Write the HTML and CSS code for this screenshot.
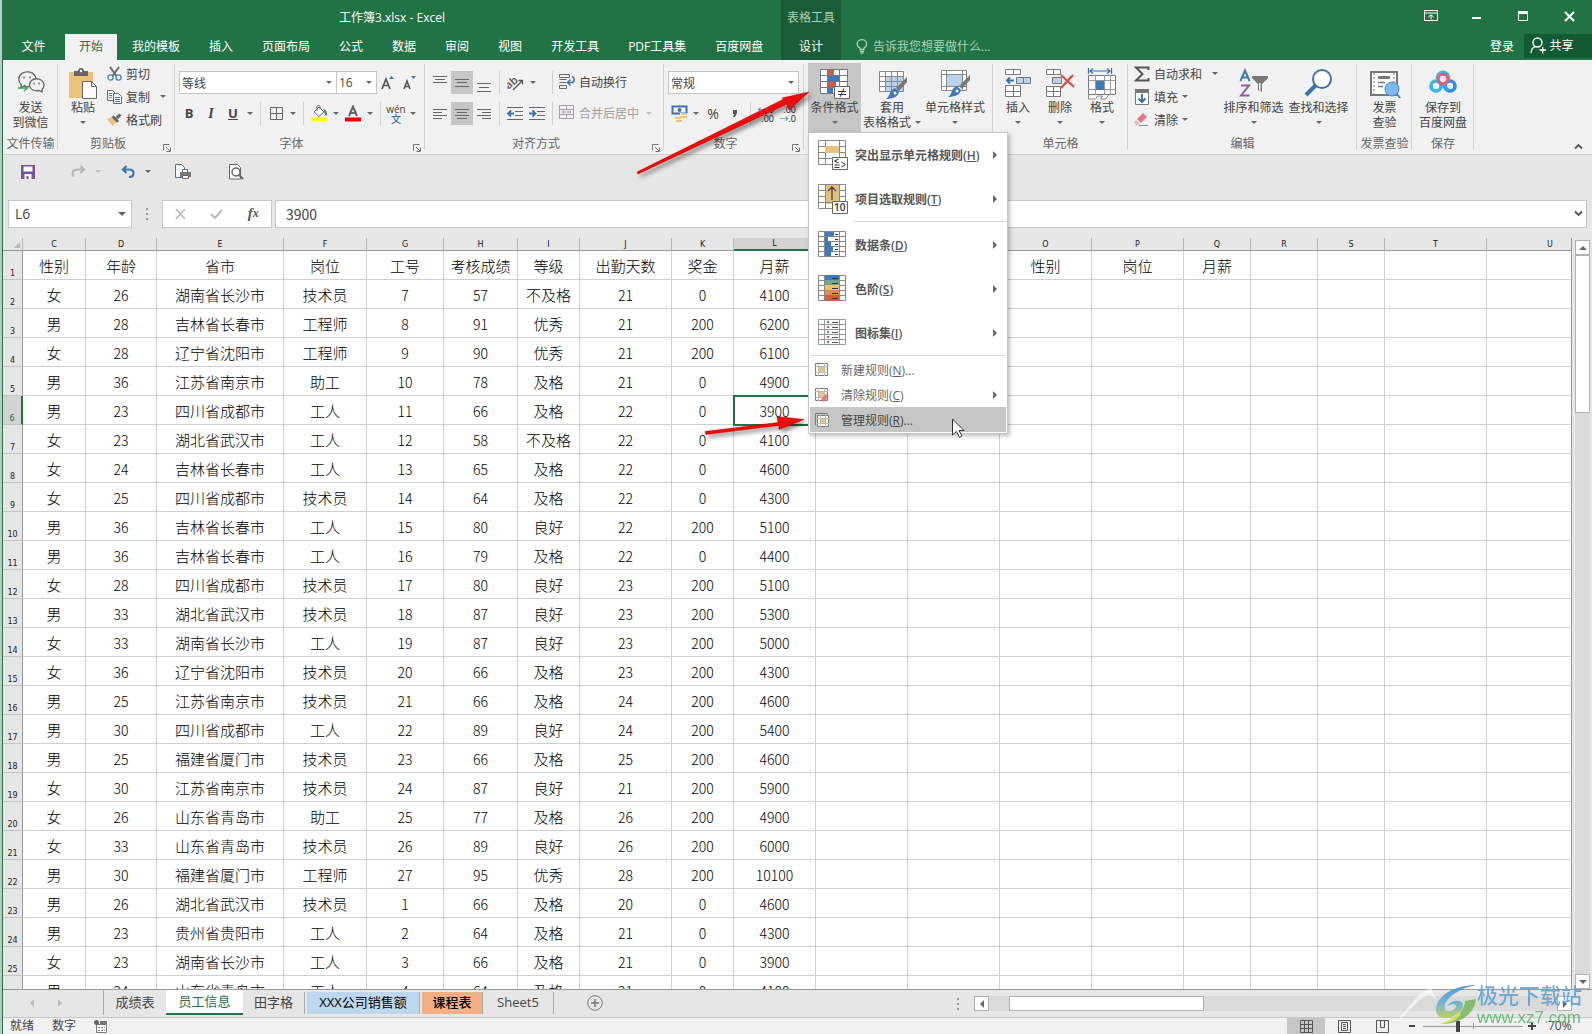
FILE: index.html
```html
<!DOCTYPE html>
<html lang="zh-CN">
<head>
<meta charset="utf-8">
<title>工作簿3.xlsx - Excel</title>
<link rel="stylesheet" href="styles.css">
</head>
<body>
<div class="app">
  <header class="titlebar">
    <div class="title-main">
      <div class="title-text">工作簿3.xlsx - Excel</div>
      <nav class="tabs">
        <button class="tab tab-file">文件</button>
        <button class="tab tab-active">开始</button>
        <button class="tab">我的模板</button>
        <button class="tab">插入</button>
        <button class="tab">页面布局</button>
        <button class="tab">公式</button>
        <button class="tab">数据</button>
        <button class="tab">审阅</button>
        <button class="tab">视图</button>
        <button class="tab">开发工具</button>
        <button class="tab">PDF工具集</button>
        <button class="tab">百度网盘</button>
      </nav>
    </div>
    <div class="title-context">
      <div class="context-name">表格工具</div>
      <button class="tab">设计</button>
    </div>
    <div class="title-side">
      <div class="window-buttons">
        <button aria-label="功能区显示选项"><svg width="14" height="12" viewBox="0 0 14 12" fill="none" stroke="#fff"><path d="M.5.5h13v10H.5zM.5 3h13M7 9.500V5M4.500 7L7 4.800 9.500 7"/></svg></button>
        <button aria-label="最小化"><svg width="10" height="12" viewBox="0 0 10 12"><path d="M0 7h9v2H0z" fill="#fff"/></svg></button>
        <button aria-label="最大化"><svg width="11" height="11" viewBox="0 0 11 11"><path d="M.5.5h9v9h-9z" fill="none" stroke="#fff"/><path d="M0 0h10v3H0z" fill="#fff"/></svg></button>
        <button aria-label="关闭"><svg width="11" height="11" viewBox="0 0 11 11"><path d="M1 1l9 9M10 1l-9 9" stroke="#fff" stroke-width="2"/></svg></button>
      </div>
      <div class="account-row">
        <label class="tell-me">
          <svg width="12" height="15" viewBox="0 0 12 15" fill="none" stroke="#a9d3b8" stroke-width="1.300"><path d="M4 10.500V9C2 8 1.200 6.500 1.200 5a4.600 4.200 0 0 1 9.400 0c0 1.500-.8 3-2.600 4v1.500zM4 12.300h4M4.500 14h3"/></svg>
          <input type="text" placeholder="告诉我您想要做什么..." aria-label="告诉我您想要做什么">
        </label>
        <button class="login">登录</button>
        <button class="share"><svg width="16" height="17" viewBox="0 0 16 17" fill="none" stroke="#fff" stroke-width="1.400"><circle cx="7.500" cy="5.500" r="4.500"/><path d="M1 16c.3-3.500 2-5.500 4-6.300M9.500 13H16M12.700 10v6.500"/></svg>共享</button>
      </div>
    </div>
  </header>

  <section class="ribbon">
    <div class="group g-send">
      <div class="group-body">
        <button class="big"><svg width="28" height="32" viewBox="0 0 28 32" fill="none" stroke="#666" stroke-width="1.300"><path d="M12 18.500c-2 .5-4 .2-5.500-.3L3.500 20l.8-3.200C.8 13 1 8 5 5.400c4-2.600 10-1.800 12.500 1.600 1 1.300 1.200 2 1.200 3"/><path d="M25 21.500c3-2.500 2.500-7-.5-9.300-3-2-7.500-2-10 .3-3.300 3-2.300 7.500 1 9.300 2.200 1.200 4.500 1.200 6.500.7l3 1.500z"/><path d="M7 8.500v2M13 8.500v2M17 14.500v2M22 14.500v2"/><path d="M1 20h9M7 17l3.500 3L7 23" stroke="#3aa56a"/></svg><span>发送</span><span>到微信</span></button>
      </div>
      <div class="group-foot"><span>文件传输</span></div>
    </div>

    <div class="group g-clip">
      <div class="group-body">
        <button class="big"><svg width="30" height="32" viewBox="0 0 30 32"><path d="M1 4h24v26H1z" fill="#edc17a"/><path d="M6 3h4c0-4 6-4 6 0h4v5H6z" fill="#666"/><circle cx="13" cy="3" r="1.200" fill="#fff"/><path d="M14.500 13.500h9l5 5v12h-14z" fill="#fff" stroke="#666"/><path d="M23.500 13.500v5h5" fill="none" stroke="#666"/></svg><span>粘贴</span><i class="caret"></i></button>
        <div class="stack">
          <button class="line"><svg width="15" height="15" viewBox="0 0 15 15" fill="none"><path d="M3 1l6.500 9M12 1L5.500 10" stroke="#666" stroke-width="2"/><circle cx="3.500" cy="11.500" r="2.600" stroke="#4a7ebb" stroke-width="1.300"/><circle cx="11.500" cy="11.500" r="2.600" stroke="#4a7ebb" stroke-width="1.300"/></svg><span>剪切</span></button>
          <button class="line"><svg width="15" height="14" viewBox="0 0 15 14"><path d="M.5.500h5l2 2v8h-7z" fill="#fff" stroke="#666"/><path d="M6.500 3.500h5l3 3v7h-8z" fill="#fff" stroke="#4a6f9f"/><path d="M2 3.500h3M2 5.500h3M2 7.500h3M8 7.500h5M8 9.500h5M8 11.500h5" stroke="#4a7ebb"/></svg><span class="copy-label">复制</span><i class="caret"></i></button>
          <button class="line"><svg width="15" height="14" viewBox="0 0 16 14"><path d="M0 6l5-2 5 5-4 4.500z" fill="#edc17a"/><path d="M5 4l2-2 6 6-2.500 2z" fill="#666"/><path d="M9 4l4-4 2.500 2L12 6z" fill="#666"/></svg><span>格式刷</span></button>
        </div>
      </div>
      <div class="group-foot"><span>剪贴板</span><button class="launcher" aria-label="剪贴板设置"><svg width="8" height="8" viewBox="0 0 8 8" fill="none" stroke="#777"><path d="M.5 6.500v-6h6M3 3l4 4M7.500 3.500v4h-4"/></svg></button></div>
    </div>

    <div class="group g-font">
      <div class="group-body rows">
        <div class="row fonts">
          <button class="combo font-name"><span>等线</span><i class="caret"></i></button><button class="combo font-size"><span>16</span><i class="caret"></i></button>
          <button class="slot" aria-label="增大字号"><svg width="14" height="16" viewBox="0 0 14 16"><path d="M1 14L5 4l4 10M2.500 10.500h5" fill="none" stroke="#555" stroke-width="1.700"/><path d="M8 4l2.500-3L13 4z" fill="#3b73af"/></svg></button>
          <button class="slot" aria-label="减小字号"><svg width="14" height="16" viewBox="0 0 14 16"><path d="M1 14l3-8 3 8M2 11.500h4" fill="none" stroke="#555" stroke-width="1.600"/><path d="M8 1l2.500 3L13 1z" fill="#3b73af"/></svg></button>
        </div>
        <div class="row">
          <button class="slot"><b>B</b></button><button class="slot"><b class="ital">I</b></button><button class="slot"><b class="under">U</b></button><button class="drop" aria-label="下划线选项"><i class="caret"></i></button><i class="vsep"></i>
          <button class="slot" aria-label="边框"><svg width="13" height="13" viewBox="0 0 13 13" fill="none" stroke="#666"><path d="M.5.500h12v12H.5zM6.500 0v13M0 6.500h13"/></svg></button><button class="drop" aria-label="边框选项"><i class="caret"></i></button><i class="vsep"></i>
          <button class="slot" aria-label="填充颜色"><svg width="17" height="17" viewBox="0 0 17 17"><path d="M3 7l5-5 5 5-5 4.500z" fill="#fff" stroke="#666"/><path d="M6 6V1.500c0-1.500 3-1.500 3 0V4" fill="none" stroke="#666"/><path d="M12 4c4 1 4.500 4 3.500 7-2-1-1.500-4-3.500-7z" fill="#3b73af"/><path d="M0 12.500h16v4H0z" fill="#ff0"/></svg></button><button class="drop" aria-label="填充选项"><i class="caret"></i></button>
          <button class="slot" aria-label="字体颜色"><svg width="16" height="17" viewBox="0 0 16 17"><path d="M4 11l4-9.500L12 11M5.500 8h5" fill="none" stroke="#666" stroke-width="2"/><path d="M0 12.500h16v4H0z" fill="#f00000"/></svg></button><button class="drop" aria-label="字体颜色选项"><i class="caret"></i></button><i class="vsep"></i>
          <button class="slot phonetic"><span>wén</span><span>文</span></button><button class="drop" aria-label="拼音选项"><i class="caret"></i></button>
        </div>
      </div>
      <div class="group-foot"><span>字体</span><button class="launcher" aria-label="字体设置"><svg width="8" height="8" viewBox="0 0 8 8" fill="none" stroke="#777"><path d="M.5 6.500v-6h6M3 3l4 4M7.500 3.500v4h-4"/></svg></button></div>
    </div>

    <div class="group g-align">
      <div class="group-body rows">
        <div class="row">
          <button class="slot" aria-label="顶端对齐"><svg width="14" height="18" viewBox="0 0 14 18" stroke="#666"><path d="M0 2.500h14M2 5.500h10M0 8.500h14"/></svg></button><button class="slot pressed" aria-label="垂直居中"><svg width="14" height="18" viewBox="0 0 14 18" stroke="#666"><path d="M0 5.500h14M2 8.500h10M0 12.500h14"/></svg></button><button class="slot" aria-label="底端对齐"><svg width="14" height="18" viewBox="0 0 14 18" stroke="#666"><path d="M0 9.500h14M2 13.500h10M0 17.500h14"/></svg></button><i class="vsep"></i>
          <button class="slot" aria-label="方向"><svg width="17" height="16" viewBox="0 0 17 16"><text x="-2" y="11" font-size="11" font-weight="600" font-family="Open Sans, sans-serif" fill="#555" transform="rotate(-40 5 8)">ab</text><path d="M6 15L15 6M11.500 5.500H15.500V9.500" fill="none" stroke="#555" stroke-width="1.300"/></svg></button><button class="drop wide" aria-label="方向选项"><i class="caret"></i></button><i class="vsep"></i>
          <button class="line wrap"><svg width="16" height="15" viewBox="0 0 16 15" fill="none"><path d="M.5.500h10v3H.5zM.5 5.500h7M.5 8.500h7M.5 11.500h7v3h-7z" stroke="#666"/><path d="M13 2.500c3 1 3 6-.5 6H9M11.500 5.500l-3 3 3 3" stroke="#3b73af" stroke-width="1.500"/></svg><span>自动换行</span></button>
        </div>
        <div class="row">
          <button class="slot" aria-label="左对齐"><svg width="14" height="12" viewBox="0 0 14 12" stroke="#666"><path d="M0 1.500h14M0 4.500h9M0 7.500h14M0 10.500h9"/></svg></button><button class="slot pressed" aria-label="居中"><svg width="14" height="12" viewBox="0 0 14 12" stroke="#666"><path d="M0 1.500h14M2 4.500h10M0 7.500h14M2 10.500h10"/></svg></button><button class="slot" aria-label="右对齐"><svg width="14" height="12" viewBox="0 0 14 12" stroke="#666"><path d="M0 1.500h14M5 4.500h9M0 7.500h14M5 10.500h9"/></svg></button><i class="vsep"></i>
          <button class="slot" aria-label="减少缩进"><svg width="16" height="13" viewBox="0 0 16 13" fill="none"><path d="M0 .5h16M8 4.500h8M8 8.500h8M0 12.500h16" stroke="#666"/><path d="M7 6.500H1.500M4 3.500l-3 3 3 3" stroke="#3b73af" stroke-width="1.800"/></svg></button><button class="slot" aria-label="增加缩进"><svg width="16" height="13" viewBox="0 0 16 13" fill="none"><path d="M0 .5h16M8 4.500h8M8 8.500h8M0 12.500h16" stroke="#666"/><path d="M0 6.500h5.500M3.500 3.500l3 3-3 3" stroke="#3b73af" stroke-width="1.800"/></svg></button><i class="vsep"></i>
          <button class="line wrap faded" disabled><svg width="16" height="15" viewBox="0 0 16 15" fill="none" stroke="#a8a0a8"><path d="M.5.500h14v13H.5zM.5 4.500h14M.5 9.500h14M7.500 0v4M7.500 10v4M3 7h9M5 5.500L3 7l2 1.500M10 5.500L12 7l-2 1.500"/></svg><span>合并后居中</span></button><button class="drop faded" aria-label="合并选项"><i class="caret"></i></button>
        </div>
      </div>
      <div class="group-foot"><span>对齐方式</span><button class="launcher" aria-label="对齐设置"><svg width="8" height="8" viewBox="0 0 8 8" fill="none" stroke="#777"><path d="M.5 6.500v-6h6M3 3l4 4M7.500 3.500v4h-4"/></svg></button></div>
    </div>

    <div class="group g-num">
      <div class="group-body rows">
        <div class="row"><button class="combo num-format"><span>常规</span><i class="caret"></i></button></div>
        <div class="row">
          <button class="slot" aria-label="会计数字格式"><svg width="17" height="17" viewBox="0 0 17 17"><path d="M1.500 1.500h14v7h-14z" fill="#fff" stroke="#3b73af" stroke-width="2"/><circle cx="8.500" cy="5" r="2" fill="#3b73af"/><path d="M9 8h8v6H9z" fill="#f1f1f1"/><path d="M10 8h6v2h-6zM9 11h7v2H9zM4 12h6v2H4zM5 15h6v2H5z" fill="#edc17a"/></svg></button><button class="drop" aria-label="货币选项"><i class="caret"></i></button><button class="slot percent">%</button><button class="slot" aria-label="千位分隔样式"><svg width="6" height="9" viewBox="0 0 6 9"><path d="M1 1h4v3L3 8H1l1-3H1z" fill="#555"/></svg></button><i class="vsep"></i>
          <button class="slot decimals"><span><em>←</em>.0</span><span>.00</span></button><button class="slot decimals"><span>.00</span><span><em>→</em>.0</span></button>
        </div>
      </div>
      <div class="group-foot"><span>数字</span><button class="launcher" aria-label="数字设置"><svg width="8" height="8" viewBox="0 0 8 8" fill="none" stroke="#777"><path d="M.5 6.500v-6h6M3 3l4 4M7.500 3.500v4h-4"/></svg></button></div>
    </div>

    <div class="group g-style">
      <div class="group-body">
        <div class="menu-anchor">
          <button class="big pressed" aria-expanded="true"><svg width="32" height="32" viewBox="0 0 32 32"><path d="M1.500 1.500h27v24h-27z" fill="#fff"/><path d="M9 1h6v6H9zM9 13h8v6H9z" fill="#d05a4a"/><path d="M9 7h11v6H9zM9 19h5v6H9z" fill="#3f7ab8"/><path d="M1.500 1.500h27v24h-27zM1 7.500h28M1 13.500h28M1 19.500h28M8.500 1v24M20.500 1v24" fill="none" stroke="#777"/><path d="M15.500 18.500h15v12h-15z" fill="#fff" stroke="#666"/><path d="M19 23.500h8M19 26.500h8M25 20.500l-4 8.500" stroke="#333" fill="none"/></svg><span>条件格式</span><i class="caret"></i></button>
          <div class="menu" role="menu">
            <button class="item item-large"><svg width="30" height="30" viewBox="0 0 30 30"><path d="M.5.500h27v24H.5z" fill="#fff"/><path d="M.5.500h27v24H.5zM0 6.500h28M0 12.500h28M0 18.500h28M7.500 0v24M21.500 0v24" fill="none" stroke="#888"/><path d="M7 6h14v7H7z" fill="#e9c47c"/><path d="M14.500 17.500h15v12h-15z" fill="#fff" stroke="#666"/><path d="M20.500 19l-4 2 4 2M16.500 25h5M16.500 27.500h5M23.500 22l4 2.500-4 2.500" fill="none" stroke="#333"/></svg><span>突出显示单元格规则(<u>H</u>)</span><i class="arrow"></i></button>
            <button class="item item-large"><svg width="30" height="30" viewBox="0 0 30 30"><path d="M7 0h14v20H7z" fill="#e2c27d"/><path d="M.5.500h27v24H.5zM0 6.500h7M21 6.500h7M0 12.500h7M21 12.500h7M0 18.500h28M7.500 0v24M21.500 0v24" fill="none" stroke="#888"/><path d="M14 16V3M10 7l4-4 4 4" fill="none" stroke="#444" stroke-width="1.300"/><path d="M14.500 17.500h15v12h-15z" fill="#fff" stroke="#666"/><text x="16" y="27" font-size="10" font-family="Open Sans, sans-serif" fill="#333">10</text></svg><span>项目选取规则(<u>T</u>)</span><i class="arrow"></i></button>
            <hr class="indent">
            <button class="item item-large"><svg width="30" height="28" viewBox="0 0 30 28"><path d="M.5.500h27v25H.5zM0 5.500h28M0 10.500h28M0 15.500h28M0 20.500h28M6.500 0v26M21.500 0v26" fill="none" stroke="#888"/><path d="M7 1h9v4H7zM7 6h3v4H7zM7 10h6v6H7zM7 16h8v5H7zM7 21h6v4H7z" fill="#3f7ab8"/><path d="M17 3.500h3M17 8.500h3M17 13.500h3M17 18.500h3M17 23.500h3" stroke="#333"/></svg><span>数据条(<u>D</u>)</span><i class="arrow"></i></button>
            <button class="item item-large"><svg width="30" height="28" viewBox="0 0 30 28"><path d="M.5.500h27v25H.5zM0 5.500h28M0 10.500h28M0 15.500h28M0 20.500h28M6.500 0v26M21.500 0v26" fill="none" stroke="#888"/><path d="M7 0h14v5H7z" fill="#3f7ab8"/><path d="M7 5h14v5H7z" fill="#6fa88f"/><path d="M7 10h14v5H7z" fill="#e9c46c"/><path d="M7 15h14v5H7z" fill="#e08a50"/><path d="M7 20h14v6H7z" fill="#d65a40"/><path d="M14 3.500h6M14 8.500h6M14 13.500h6M14 18.500h6M14 23.500h6" stroke="#333"/></svg><span>色阶(<u>S</u>)</span><i class="arrow"></i></button>
            <button class="item item-large"><svg width="30" height="28" viewBox="0 0 30 28"><path d="M.5.500h27v25H.5zM0 5.500h28M0 10.500h28M0 15.500h28M0 20.500h28M6.500 0v26M21.500 0v26" fill="none" stroke="#999"/><path d="M9 2h2v2H9zM9 12h2v2H9zM9 22h2v2H9z" fill="#4f9a7f"/><path d="M9 7h2v2H9zM9 17h2v2H9z" fill="#d65a40"/><path d="M14 3.500h6M14 8.500h6M14 13.500h6M14 18.500h6M14 23.500h6" stroke="#555"/></svg><span>图标集(<u>I</u>)</span><i class="arrow"></i></button>
            <hr>
            <button class="item"><svg width="14" height="14" viewBox="0 0 14 14"><path d="M.5.500h12v12H.5z" fill="#fff" stroke="#777"/><path d="M0 3.500h13M0 9.500h13M3.500 0v13M9.500 0v13" stroke="#bbb"/><path d="M4 4h5v5H4z" fill="#e9c47c"/></svg><span>新建规则(<u>N</u>)...</span></button>
            <button class="item"><svg width="14" height="14" viewBox="0 0 14 14"><path d="M.5.500h12v12H.5z" fill="#fff" stroke="#777"/><path d="M0 3.500h13M0 9.500h13M3.500 0v13M9.500 0v13" stroke="#bbb"/><path d="M4 4h5v5H4z" fill="#e9c47c"/><path d="M6 11l5-5 3 2.500L9 14z" fill="#e8748a"/></svg><span>清除规则(<u>C</u>)</span><i class="arrow"></i></button>
            <button class="item item-hover"><svg width="14" height="14" viewBox="0 0 14 14"><path d="M.5 12V.5H13" fill="none" stroke="#777"/><path d="M2.500 2.500h11v11h-11z" fill="#fff" stroke="#777"/><path d="M2 5.500h12M2 10.500h12M5.500 2v12M10.500 2v12" stroke="#bbb"/><path d="M6 6h4v4H6z" fill="#e9c47c"/></svg><span>管理规则(<u>R</u>)...</span></button>
          </div>
        </div>
        <button class="big w-table"><svg width="32" height="32" viewBox="0 0 32 32"><path d="M3.500 3.500h24v20h-24z" fill="#fff"/><path d="M9 9h18v14H9z" fill="#b9d3ea"/><path d="M3.500 3.500h24v20h-24zM3 8.500h25M3 13.500h25M3 18.500h25M9.500 3v21M15.500 3v21M21.500 3v21" fill="none" stroke="#888"/><path d="M31 9v5l-8 9-3-3z" fill="#777"/><path d="M19 20l4 4c-1 5-7 7-13 7 4-2 3-9 9-11z" fill="#3f7ab8"/><circle cx="19" cy="25" r="1.500" fill="#fff"/></svg><span>套用</span><span>表格格式<i class="caret"></i></span></button>
        <button class="big w-cell"><svg width="32" height="32" viewBox="0 0 32 32"><path d="M2.500 2.500h25v20h-25z" fill="#fff"/><path d="M7 7h16v11H7z" fill="#b9d3ea"/><path d="M2.500 2.500h25v20h-25zM2 6.500h26M2 18.500h26M7.500 2v21M23.500 2v21" fill="none" stroke="#888"/><path d="M31 7v5l-8 9-3-3z" fill="#777"/><path d="M18 18l4 4c-1 5-7 7-13 7 4-2 3-9 9-11z" fill="#3f7ab8"/><circle cx="18" cy="23" r="1.500" fill="#fff"/></svg><span>单元格样式</span><i class="caret"></i></button>
      </div>
      <div class="group-foot"></div>
    </div>

    <div class="group g-cells">
      <div class="group-body">
        <button class="big w-small"><svg width="28" height="32" viewBox="0 0 28 32"><path d="M1.500 1.500h15v5h-15zM9.500 1v6M1.500 17.500h15v11h-15zM1 23.500h16M9.500 17v12" fill="#fff" stroke="#777"/><path d="M12.500 9.500h14v6h-14z" fill="#b9d3ea" stroke="#777"/><path d="M19.500 9v7" stroke="#777"/><path d="M10 12.500H3M6 9.500l-3 3 3 3" fill="none" stroke="#3b73af" stroke-width="2"/></svg><span>插入</span><i class="caret"></i></button>
        <button class="big w-small"><svg width="30" height="32" viewBox="0 0 30 32"><path d="M1.500 1.500h14v5h-14zM8.500 1v6M1.500 18.500h14v10h-14zM1 23.500h15M8.500 18v11" fill="#fff" stroke="#777"/><path d="M7.500 9.500h9v6h-9z" fill="#b9d3ea" stroke="#777"/><path d="M16 7l13 12M28 7L16 20" stroke="#dc4b38" stroke-width="2.200"/></svg><span>删除</span><i class="caret"></i></button>
        <button class="big w-small"><svg width="30" height="32" viewBox="0 0 30 32"><path d="M1.500 0v6M24.500 0v6M3 3h20M6 .5L3 3l3 2.500M20 .5L23 3l-3 2.500" fill="none" stroke="#3b73af" stroke-width="1.200"/><path d="M1.500 7.500h27v19h-27z" fill="#fff" stroke="#777"/><path d="M1 12.500h28M1 21.500h28M8.500 7v20M17.500 7v20M23.500 7v20" stroke="#999"/><path d="M9 13h8v9H9z" fill="#3f7ab8"/><path d="M1.500 27v4h7l2-3h5l-2 3h5l3-4" fill="#fff" stroke="#888"/></svg><span>格式</span><i class="caret"></i></button>
      </div>
      <div class="group-foot"><span>单元格</span></div>
    </div>

    <div class="group g-edit">
      <div class="group-body">
        <div class="stack">
          <button class="line"><svg width="16" height="16" viewBox="0 0 16 16"><path d="M14.500 4V1.500H2L8.500 8 2 14.500h12.500V12" fill="none" stroke="#555" stroke-width="2"/></svg><span class="sum-label">自动求和</span><i class="caret"></i></button>
          <button class="line"><svg width="16" height="16" viewBox="0 0 16 16"><path d="M1.500 1.500h13v14h-13z" fill="#fff" stroke="#777"/><path d="M1 0h14v4H1z" fill="#777"/><path d="M8 5v8M4.500 9.500L8 13l3.500-3.500" fill="none" stroke="#3b73af" stroke-width="2"/></svg><span>填充</span><i class="caret"></i></button>
          <button class="line"><svg width="16" height="14" viewBox="0 0 16 14"><path d="M3 6l6-6 4 4-6 6z" fill="#e8748a"/><path d="M2 7l4 4-2 1H2L0 9z" fill="#f2b0bc"/><path d="M5 12.500h9" stroke="#888"/></svg><span>清除</span><i class="caret"></i></button>
        </div>
        <button class="big w-find"><svg width="30" height="32" viewBox="0 0 30 32"><path d="M1.500 13L6 2.500 10.500 13M3 9.500h6" fill="none" stroke="#3f7ab8" stroke-width="2"/><path d="M2 17.500h8L2 27.500h8.500" fill="none" stroke="#8e5aa8" stroke-width="2"/><path d="M13 8h16v2l-6 6v8l-4-2v-6l-6-6z" fill="#777"/><path d="M20 15v7l1.500 1v-8z" fill="#fff"/></svg><span>排序和筛选</span><i class="caret"></i></button>
        <button class="big w-find"><svg width="30" height="32" viewBox="0 0 30 32"><path d="M2 27L12 17" stroke="#3b73af" stroke-width="4"/><circle cx="18" cy="11" r="9" fill="#fff" stroke="#3b73af" stroke-width="2"/></svg><span>查找和选择</span><i class="caret"></i></button>
      </div>
      <div class="group-foot"><span>编辑</span></div>
    </div>

    <div class="group g-send">
      <div class="group-body">
        <button class="big"><svg width="32" height="32" viewBox="0 0 32 32"><path d="M2 4h26v23H2z" fill="#fff" stroke="#777" stroke-width="2"/><path d="M5 5v21M25 5v12" stroke="#777" stroke-dasharray="2 2"/><path d="M9 8h12v3H9z" fill="#777"/><path d="M9 14.500h7M9 18.500h5" stroke="#777" stroke-width="1.500"/><circle cx="23" cy="21" r="7" fill="#7db8ec" stroke="#4a86c0"/><path d="M28 26l3 4" stroke="#4a86c0" stroke-width="2"/></svg><span>发票</span><span>查验</span></button>
      </div>
      <div class="group-foot"><span>发票查验</span></div>
    </div>

    <div class="group g-save">
      <div class="group-body">
        <button class="big w-save"><svg width="28" height="32" viewBox="0 0 28 32" fill="none" stroke-width="3.600"><circle cx="7" cy="18" r="5" stroke="#35b8ea"/><circle cx="21" cy="18" r="5" stroke="#2d8cf0"/><path d="M8.500 11a5.600 5.600 0 1 1 11 0" stroke="#35b8ea"/><path d="M10 14l9 8" stroke="#35a4ee"/><circle cx="14" cy="11" r="4.800" stroke="#ee5b78" stroke-width="3"/></svg><span>保存到</span><span>百度网盘</span></button>
      </div>
      <div class="group-foot"><span>保存</span></div>
    </div>
    <button class="collapse" aria-label="折叠功能区"><svg width="9" height="7" viewBox="0 0 9 7"><path d="M1 5.500L4.500 2 8 5.500" fill="none" stroke="#555" stroke-width="1.800"/></svg></button>
  </section>

  <section class="quick">
    <button class="q-save" aria-label="保存"><svg width="14" height="14" viewBox="0 0 14 14"><path d="M0 0h14v14H0z" fill="#7a4f9e"/><path d="M2.500 1.500h9v5h-9zM3.500 9h7v5h-7z" fill="#fff"/><path d="M5.500 11h2v3h-2z" fill="#7a4f9e"/></svg></button>
    <button class="q-redo" aria-label="恢复" disabled><svg width="15" height="13" viewBox="0 0 15 13" fill="none" stroke="#b5b5b5" stroke-width="2"><path d="M13 4.500H6C2 4.500.5 8 2.500 11.500M9.500 1L13 4.500 9.500 8"/></svg><i class="caret"></i></button>
    <button class="q-undo" aria-label="撤消"><svg width="15" height="13" viewBox="0 0 15 13" fill="none" stroke="#3b73af" stroke-width="2.200"><path d="M2 4.500h6c6 0 6 7.500 0 7.500M5.500 1L2 4.500 5.500 8"/></svg><i class="caret"></i></button>
    <button class="q-print" aria-label="快速打印"><svg width="17" height="16" viewBox="0 0 17 16"><path d="M.5.500h6l3 3v10H.5z" fill="#fff" stroke="#4a6f9f"/><path d="M7.500 5.500h5v3h-5z" fill="#fff" stroke="#666"/><path d="M5 8h11v5H5z" fill="#777"/><path d="M7.500 11.500h6v3h-6z" fill="#fff" stroke="#666"/></svg></button>
    <button class="q-view" aria-label="打印预览"><svg width="15" height="16" viewBox="0 0 15 16"><path d="M.5.500h8l3 3v11.500H.5z" fill="#fff" stroke="#666"/><circle cx="7" cy="8" r="4" fill="#fff" stroke="#666" stroke-width="1.500"/><path d="M10 11l4 4" stroke="#666" stroke-width="2"/></svg></button>
  </section>

  <section class="formula">
    <div class="name-box"><input type="text" value="L6" aria-label="名称框"><i class="caret caret-big"></i></div>
    <i class="grip"></i>
    <div class="fx">
      <button aria-label="取消"><svg width="11" height="10" viewBox="0 0 11 10"><path d="M1 0l9 10M10 0L1 10" stroke="#bbb" stroke-width="1.600"/></svg></button>
      <button aria-label="输入"><svg width="13" height="10" viewBox="0 0 13 10"><path d="M1 5l4 4 7-8" fill="none" stroke="#bbb" stroke-width="2"/></svg></button>
      <button class="fx-name">f<small>x</small></button>
    </div>
    <div class="formula-box"><input type="text" value="3900" aria-label="编辑栏"><svg width="9" height="7" viewBox="0 0 9 7"><path d="M1 1.500L4.500 5 8 1.500" fill="none" stroke="#555" stroke-width="1.800"/></svg></div>
  </section>

  <main class="work">
    <div class="sheet">
      <table class="grid" id="grid">
        <colgroup><col class="c20"><col class="c63"><col class="c71"><col class="c127"><col class="c83"><col class="c77"><col class="c74"><col class="c62"><col class="c92"><col class="c62"><col class="c82"><col class="c92"><col class="c92"><col class="c92"><col class="c92"><col class="c67"><col class="c67"><col class="c67"><col class="c102"><col class="c127"></colgroup>
        <thead><tr id="letters"></tr></thead>
        <tbody id="rows"></tbody>
      </table>
    </div>
    <div class="vscroll">
      <button class="sb" aria-label="向上滚动"><i class="tri-up"></i></button>
      <div class="vtrack"><div class="vthumb"></div></div>
      <button class="sb" aria-label="向下滚动"><i class="tri-down"></i></button>
    </div>
  </main>

  <footer class="sheetbar">
    <div class="sheet-nav"><button aria-label="上一张"><i class="tri-left pale"></i></button><button aria-label="下一张"><i class="tri-right pale"></i></button></div>
    <div class="sheet-tabs">
      <button class="stab s1">成绩表</button>
      <button class="stab s2">员工信息</button>
      <button class="stab s3">田字格</button>
      <button class="stab s4">XXX公司销售额</button>
      <button class="stab s5">课程表</button>
      <button class="stab s6">Sheet5</button>
    </div>
    <button class="add-sheet" aria-label="新工作表"><svg width="16" height="16" viewBox="0 0 16 16" fill="none" stroke="#777"><circle cx="8" cy="8" r="7.300"/><path d="M8 4v8M4 8h8" stroke-width="1.500"/></svg></button>
    <div class="hscroll">
      <i class="grip"></i>
      <button class="sb" aria-label="向左滚动"><i class="tri-left"></i></button>
      <div class="htrack"><div class="hthumb"></div></div>
      <button class="sb" aria-label="向右滚动"><i class="tri-right"></i></button>
    </div>
  </footer>

  <footer class="status">
    <span>就绪</span><span>数字</span>
    <svg width="13" height="13" viewBox="0 0 13 13"><path d="M2.500 4.500h10v8h-10z" fill="#fff" stroke="#777"/><path d="M6 1h7v3H6z" fill="#777"/><circle cx="2.500" cy="2.500" r="2.500" fill="#666"/><path d="M4 7.500h7M4 10.500h7" stroke="#777" stroke-dasharray="2 1"/></svg>
    <div class="views">
      <button class="view-on" aria-label="普通"><svg width="13" height="13" viewBox="0 0 13 13" fill="none" stroke="#555"><path d="M.5.500h12v12H.5zM4.500 0v13M8.500 0v13M0 4.500h13M0 8.500h13"/></svg></button>
      <button aria-label="页面布局"><svg width="13" height="13" viewBox="0 0 13 13" fill="none" stroke="#555"><path d="M.5.500h12v12H.5zM3.500 2.500h6v8h-6zM5 4.500h3M5 6.500h3M5 8.500h3"/></svg></button>
      <button aria-label="分页预览"><svg width="13" height="13" viewBox="0 0 13 13" fill="none" stroke="#555"><path d="M.5.500h12v12H.5zM4.500 0v7.500M8.500 0v7.500M4.500 7.500h4"/></svg></button>
    </div>
    <button class="zoom-btn" aria-label="缩小"><svg width="7" height="8" viewBox="0 0 7 8"><path d="M0 4h6" stroke="#444" stroke-width="2"/></svg></button>
    <input class="zoom" type="range" min="0" max="100" value="34" aria-label="显示比例">
    <button class="zoom-btn" aria-label="放大"><svg width="8" height="8" viewBox="0 0 8 8"><path d="M0 4h8M4 0v8" stroke="#444" stroke-width="2"/></svg></button>
    <span class="zoom-value">70%</span>
  </footer>
</div>

<svg class="note-arrows" width="400" height="400" viewBox="630 80 400 400">
  <defs><filter id="shade" x="-20%" y="-20%" width="150%" height="160%"><feDropShadow dx="3" dy="3" stdDeviation="2" flood-opacity=".45"/></filter></defs>
  <g fill="#ee0808" stroke="#b00" stroke-width=".5" filter="url(#shade)">
    <path d="M637 172l147-73-2-1 27-6-20 18-2-6-149 70z"/>
    <path d="M705 431.500l73-9-1-6 27 3-25 10v-4l-73 9z"/>
  </g>
  <path d="M952.500 419v16l4-3.500 3 6 2.500-1.500-3-5.500h5z" fill="#fff" stroke="#333"/>
</svg>
<div class="site-mark">
  <svg width="80" height="42" viewBox="0 0 80 42">
    <defs><linearGradient id="swirl" x1="0" y1="0" x2="0" y2="1"><stop offset="0" stop-color="#3f93cf"/><stop offset=".5" stop-color="#5aa9d8"/><stop offset="1" stop-color="#b9cf4e"/></linearGradient></defs>
    <path d="M0 38C12 22 22 8 34 4l6 12-8-6C22 14 10 30 0 38z" fill="#fff" opacity=".7"/>
    <path d="M80 1C62 1 42 8 39 24c-1 9 7 12 15 9 8-2 13-8 12-13-2-5-12-4-16 2 6-3 10-2 9 1-2 4-9 6-11 2-3-9 14-21 32-24z" fill="url(#swirl)"/>
    <path d="M79 15c-1 12-12 25-35 25 10-2 23-10 24-23z" fill="#79b957"/>
    <path d="M64 30c-5 7-13 10-22 10 5-1 14-5 18-11z" fill="#d5dc4e"/>
  </svg>
  <div class="mark-text"><span class="mark-name">极光下载站</span><span class="mark-url">www.xz7.com</span></div>
</div>
<script src="script.js"></script>
</body>
</html>
```

FILE: styles.css
```css
* { box-sizing: border-box; }
html, body { height: 100%; }
body {
  margin: 0;
  background: #bcc8c2;
  font-family: "Open Sans", "Noto Sans CJK SC", sans-serif;
  font-size: 12px;
  color: #444;
  overflow: hidden;
}
button, input { font: inherit; color: inherit; border: 0; background: none; padding: 0; margin: 0; }
button { display: flex; align-items: center; justify-content: center; flex: none; white-space: nowrap; }
input { outline: 0; min-width: 0; }
svg { display: block; flex: none; }
i { font-style: normal; flex: none; }

.app {
  position: relative;
  margin-left: 2px;
  height: 100vh;
  display: flex;
  flex-direction: column;
  border-left: 1px solid #217346;
  background: #e6e6e6;
}

/* Shared glyphs */
.caret { width: 0; height: 0; border: 3px solid transparent; border-top-color: #666; border-bottom: 0; }
.caret-big { border-width: 4px; border-bottom: 0; }
.vsep { width: 1px; height: 23px; margin: 0 4px; background: #d0d0d0; }
.grip { width: 2px; height: 12px; background: repeating-linear-gradient(#999 0 2px, transparent 2px 5px); }
.tri-up, .tri-down, .tri-left, .tri-right { width: 0; height: 0; border: 4px solid transparent; }
.tri-up { border-bottom-color: #666; border-top: 0; }
.tri-down { border-top-color: #666; border-bottom: 0; }
.tri-left { border-right-color: #666; border-left: 0; }
.tri-right { border-left-color: #666; border-right: 0; }
.tri-left.pale { border-right-color: #bbb; }
.tri-right.pale { border-left-color: #bbb; }

/* Title bar */
.titlebar { display: flex; height: 60px; flex: none; background: #217346; color: #fff; }
.title-main { width: 778px; flex: none; display: flex; flex-direction: column; }
.title-text { height: 34px; line-height: 35px; text-align: center; }
.tabs { display: flex; gap: 1px; }
.tab { height: 26px; padding: 0 14px 3px; }
.tab-file { width: 61px; }
.tab-active { background: #f1f1f1; color: #217346; }
.title-context { width: 60px; flex: none; background: #1a5c38; }
.context-name { height: 34px; line-height: 35px; text-align: center; color: #a9d3b8; }
.title-context .tab { width: 60px; }
.title-side { flex: 1; min-width: 0; }
.window-buttons { display: flex; justify-content: flex-end; height: 34px; }
.window-buttons button { width: 46px; height: 32px; }
.account-row { display: flex; height: 26px; align-items: center; padding-bottom: 2px; }
.tell-me { display: flex; align-items: center; gap: 5px; margin-left: 15px; flex: 1; }
.tell-me input { flex: 1; }
.tell-me input::placeholder { color: #a9d3b8; opacity: 1; }
.login { margin-right: 10px; }
.share { width: 68px; height: 24px; gap: 3px; padding: 0 12px 2px 0; background: #125a31; }

/* Ribbon */
.ribbon { position: relative; z-index: 2; display: flex; flex: none; height: 95px; background: #f1f1f1; border-bottom: 1px solid #d0d0d0; }
.group { display: flex; flex-direction: column; flex: none; padding-top: 3px; background: linear-gradient(#d2d2d2, #d2d2d2) right 4px / 1px 86px no-repeat; }
.g-send { width: 55px; }
.g-clip { width: 117px; }
.g-font { width: 250px; }
.g-align { width: 239px; }
.g-num { width: 140px; }
.g-style { width: 189px; }
.g-cells { width: 135px; }
.g-edit { width: 229px; }
.g-save { width: 62px; }
.group-body { display: flex; height: 71px; padding-left: 4px; }
.g-send .group-body, .g-save .group-body { padding-left: 0; justify-content: center; }
.group-foot { display: flex; height: 20px; line-height: 20px; color: #666; align-items: center; }
.group-foot span { flex: 1; text-align: center; white-space: nowrap; }
.launcher { width: 17px; height: 12px; align-self: flex-end; }
.big { flex-direction: column; justify-content: flex-start; width: 53px; height: 69px; padding-top: 5px; line-height: 15px; }
.big > .caret { margin-top: 6px; }
.big span { display: flex; align-items: center; height: 15px; gap: 4px; }
.g-clip .big { width: 42px; }
.big.w-table { width: 62px; }
.big.w-cell { width: 64px; }
.big.w-small { width: 42px; }
.big.w-find { width: 65px; }
.big.w-save { width: 60px; }
.pressed { background: #c6c6c6; }
.stack { display: flex; flex-direction: column; }
.g-clip .stack { width: 66px; padding-left: 3px; }
.g-edit .stack { width: 89px; padding-left: 2px; }
.line { height: 23px; gap: 4px; padding-bottom: 2px; justify-content: flex-start; }
.line.wrap { padding-left: 2px; }
.copy-label, .sum-label { margin-right: 6px; }
.rows { flex-direction: column; padding-top: 8px; gap: 8px; }
.g-font .rows { padding-left: 3px; }
.row { display: flex; align-items: center; height: 23px; }
.slot { width: 22px; height: 23px; }
.slot b { font-size: 13px; line-height: 21px; }
.slot .ital { font-family: "Liberation Serif", serif; font-style: italic; font-size: 14px; }
.slot .under { text-decoration: underline; }
.drop { width: 12px; height: 23px; }
.drop.wide { width: 22px; padding-right: 8px; }
.faded { color: #a0a0a0; }
.faded .caret { border-top-color: #c0c0c0; }
.drop.faded { margin-left: 4px; }
.combo { height: 23px; padding: 0 4px 0 2px; justify-content: space-between; background: #fff; border: 1px solid #c6c6c6; }
.font-name { width: 158px; margin-left: 1px; }
.font-size { width: 40px; border-left: 0; }
.num-format { width: 131px; }
.phonetic { flex-direction: column; font-size: 10px; line-height: 10px; }
.phonetic span:last-child { color: #3b73af; font-weight: 500; }
.percent { font-size: 14px; }
.decimals { flex-direction: column; align-items: flex-end; font-size: 9px; line-height: 9px; padding-right: 3px; color: #222; }
.decimals em { font-style: normal; color: #3b73af; }
.collapse { width: 20px; height: 16px; margin: auto 4px 0 auto; }

/* Conditional formatting menu */
.menu-anchor { position: relative; flex: none; }
.menu {
  position: absolute;
  left: 0;
  top: 69px;
  width: 200px;
  padding: 0 1px 1px;
  background: #fff;
  border: 1px solid #c6c6c6;
  box-shadow: 2px 2px 4px rgba(0, 0, 0, .25);
}
.item { width: 100%; height: 25px; padding: 0 9px 0 5px; gap: 12px; justify-content: flex-start; color: #666; }
.item .arrow { margin-left: auto; border: 4px solid transparent; border-left-color: #666; border-right: 0; }
.item-large { height: 44px; padding-left: 8px; gap: 7px; color: #555; font-weight: 600; }
.item-hover { background: #c6c6c6; color: #444; }
.menu hr { margin: 0; border: 0; height: 2px; background: linear-gradient(#d8d8d8, #d8d8d8) 0 0 / 100% 1px no-repeat; }
.menu hr.indent { margin-left: 44px; }

/* Quick access bar */
.quick { display: flex; align-items: center; height: 35px; flex: none; padding: 0 0 2px 18px; }
.quick button { justify-content: flex-start; gap: 9px; }
.q-save { width: 50px; }
.q-redo { width: 50px; }
.q-undo { width: 54px; }
.q-print { width: 54px; }
.q-redo .caret { border-top-color: #c0c0c0; }

/* Formula bar */
.formula { display: flex; align-items: flex-start; flex: none; padding: 10px 5px; height: 48px; font-size: 14px; }
.name-box, .fx, .formula-box { display: flex; align-items: center; height: 28px; padding-bottom: 1px; background: #fff; border: 1px solid #c6c6c6; }
.name-box { width: 124px; padding: 0 5px 1px 6px; }
.name-box input { flex: 1; }
.formula .grip { margin: 8px 14px 0 14px; }
.fx { width: 110px; justify-content: space-around; margin-right: 3px; }
.fx-name { font-family: "Liberation Serif", serif; font-style: italic; font-weight: bold; font-size: 15px; color: #555; }
.fx-name small { font-size: 12px; }
.formula-box { flex: 1; padding: 0 3px 1px 10px; font-family: "Noto Sans CJK SC", sans-serif; }
.formula-box input { flex: 1; }

/* Worksheet */
.work { display: flex; flex: 1; min-height: 0; }
.sheet { flex: 1; min-width: 0; overflow: hidden; background: linear-gradient(#e6e6e6, #e6e6e6) 0 0 / 100% 12px no-repeat #fff; border-right: 1px solid #999; }
.grid { table-layout: fixed; width: 1611px; border-collapse: separate; border-spacing: 0; font-family: "Noto Sans CJK SC", sans-serif; font-size: 15px; font-weight: 300; color: #000; }
.c20 { width: 20px; }
.c62 { width: 62px; }
.c63 { width: 63px; }
.c67 { width: 67px; }
.c71 { width: 71px; }
.c74 { width: 74px; }
.c77 { width: 77px; }
.c82 { width: 82px; }
.c83 { width: 83px; }
.c92 { width: 92px; }
.c102 { width: 102px; }
.c127 { width: 127px; }
.grid th, .grid td { padding: 0; overflow: hidden; white-space: nowrap; text-align: center; line-height: 20px; }
.grid th { background: #e6e6e6; font-family: "DejaVu Sans", sans-serif; font-size: 8px; font-weight: 400; line-height: 10px; color: #222; }
.grid thead th { height: 13px; padding-top: 2px; border-right: 1px solid #b5b5b5; border-bottom: 1px solid #999; }
.grid tbody th { height: 29px; border-right: 1px solid #999; border-bottom: 1px solid #c6c6c6; vertical-align: bottom; }
.grid td { padding-top: 2px; border-right: 1px solid #d0d0d0; border-bottom: 1px solid #d0d0d0; }
.grid td.num { font-size: 14px; }
.grid thead th.on { padding-top: 1px; background: #d2d2d2; border-bottom: 2px solid #217346; }
.grid tbody th.on { background: #d2d2d2; border-right: 2px solid #217346; color: #217346; }
.grid td.active { outline: 2px solid #217346; outline-offset: -1px; }
.corner { width: 0; height: 0; margin-left: 11px; border-left: 6px solid transparent; border-bottom: 6px solid #b5b5b5; }
.vscroll { width: 20px; flex: none; display: flex; flex-direction: column; padding: 2px 2px 0 3px; }
.sb { width: 15px; height: 15px; background: #fff; border: 1px solid #b0b0b0; }
.vtrack { flex: 1; width: 15px; background: #dadada; }
.vthumb { height: 158px; background: #fff; border: 1px solid #b0b0b0; }

/* Sheet tabs */
.sheetbar { display: flex; align-items: flex-start; height: 28px; flex: none; border-top: 1px solid #999; font-size: 13px; }
.sheet-nav { display: flex; width: 100px; height: 25px; padding-left: 15px; }
.sheet-nav button { width: 28px; }
.sheet-tabs { display: flex; align-items: center; border-left: 1px solid #aaa; }
.stab { height: 22px; padding-bottom: 2px; border-right: 1px solid #aaa; }
.s1 { width: 62px; border-right: 0; }
.s2 { width: 77px; height: 25px; background: #fff; color: #217346; border-right: 0; border-bottom: 2px solid #217346; }
.s3 { width: 62px; }
.s4 { width: 115px; background: #bdd7ee; color: #000; border-left: 2px solid #e6e6e6; }
.s5 { width: 63px; background: #f4b084; color: #000; font-weight: 500; border-left: 2px solid #e6e6e6; }
.s6 { width: 71px; }
.add-sheet { width: 82px; height: 25px; }
.hscroll { display: flex; align-items: center; height: 27px; width: 635px; margin-left: auto; padding-right: 20px; }
.hscroll .grip { margin: 0 15px 0 0; }
.htrack { flex: 1; height: 15px; background: #dadada; padding-left: 20px; }
.hthumb { width: 195px; height: 15px; background: #fff; border: 1px solid #b0b0b0; }

/* Status bar */
.status { display: flex; align-items: center; height: 17px; flex: none; padding-left: 7px; background: #f1f1f1; border-top: 1px solid #c6c6c6; gap: 18px; line-height: 16px; white-space: nowrap; }
.views { display: flex; margin-left: auto; }
.views button { width: 38px; height: 16px; }
.view-on { background: #c6c6c6; }
.status .zoom-btn { margin: 0 -11px 0 -10px; height: 16px; }
.zoom { appearance: none; width: 100px; height: 14px; background: linear-gradient(#999, #999) 0 50% / 100% 1px no-repeat, linear-gradient(#999, #999) 50% 50% / 1px 6px no-repeat; }
.zoom::-webkit-slider-thumb { appearance: none; width: 4px; height: 11px; background: #444; }
.status .zoom + .zoom-btn { margin: 0 -6px 0 -13px; }
.zoom-value { width: 44px; }

/* Overlays */
.note-arrows { position: absolute; left: 630px; top: 80px; z-index: 5; pointer-events: none; }
.site-mark { position: absolute; right: 10px; bottom: 6px; z-index: 5; display: flex; opacity: .85; pointer-events: none; }
.mark-text { display: flex; flex-direction: column; font-family: "Liberation Sans", "Noto Sans CJK SC", sans-serif; }
.mark-name { font-size: 21px; line-height: 24px; font-weight: 500; color: #5d9fd3; }
.mark-url { font-size: 17px; line-height: 20px; color: #56b565; }
```

FILE: script.js
```js
const letters = 'CDEFGHIJKLMNOPQRSTU'.split('');
const people = [
  '性别 年龄 省市 岗位 工号 考核成绩 等级 出勤天数 奖金 月薪',
  '女 26 湖南省长沙市 技术员 7 57 不及格 21 0 4100',
  '男 28 吉林省长春市 工程师 8 91 优秀 21 200 6200',
  '女 28 辽宁省沈阳市 工程师 9 90 优秀 21 200 6100',
  '男 36 江苏省南京市 助工 10 78 及格 21 0 4900',
  '男 23 四川省成都市 工人 11 66 及格 22 0 3900',
  '女 23 湖北省武汉市 工人 12 58 不及格 22 0 4100',
  '女 24 吉林省长春市 工人 13 65 及格 22 0 4600',
  '女 25 四川省成都市 技术员 14 64 及格 22 0 4300',
  '男 36 吉林省长春市 工人 15 80 良好 22 200 5100',
  '男 36 吉林省长春市 工人 16 79 及格 22 0 4400',
  '女 28 四川省成都市 技术员 17 80 良好 23 200 5100',
  '男 33 湖北省武汉市 技术员 18 87 良好 23 200 5300',
  '女 33 湖南省长沙市 工人 19 87 良好 23 200 5000',
  '女 36 辽宁省沈阳市 技术员 20 66 及格 23 200 4300',
  '男 25 江苏省南京市 技术员 21 66 及格 24 200 4600',
  '男 30 四川省成都市 工人 22 89 良好 24 200 5400',
  '男 25 福建省厦门市 技术员 23 66 及格 25 200 4600',
  '女 30 江苏省南京市 技术员 24 87 良好 21 200 5900',
  '女 26 山东省青岛市 助工 25 77 及格 26 200 4900',
  '女 33 山东省青岛市 技术员 26 89 良好 26 200 6000',
  '男 30 福建省厦门市 工程师 27 95 优秀 28 200 10100',
  '男 26 湖北省武汉市 技术员 1 66 及格 20 0 4600',
  '男 23 贵州省贵阳市 工人 2 64 及格 21 0 4300',
  '女 23 湖南省长沙市 工人 3 66 及格 21 0 3900',
  '男 24 山东省青岛市 工人 4 64 及格 21 0 4100'
].map(line => line.split(' '));
people[0].push('', '', '性别', '岗位', '月薪');

document.getElementById('letters').innerHTML =
  '<th><div class="corner"></div></th>' +
  letters.map(l => `<th${l === 'L' ? ' class="on"' : ''}>${l}</th>`).join('');

document.getElementById('rows').innerHTML = people.map((cells, r) => {
  const tds = letters.map((l, c) => {
    const text = cells[c] || '';
    const names = [];
    if (/^\d+$/.test(text)) names.push('num');
    if (r === 5 && l === 'L') names.push('active');
    return `<td class="${names.join(' ')}">${text}</td>`;
  }).join('');
  return `<tr><th${r === 5 ? ' class="on"' : ''}>${r + 1}</th>${tds}</tr>`;
}).join('');
```
